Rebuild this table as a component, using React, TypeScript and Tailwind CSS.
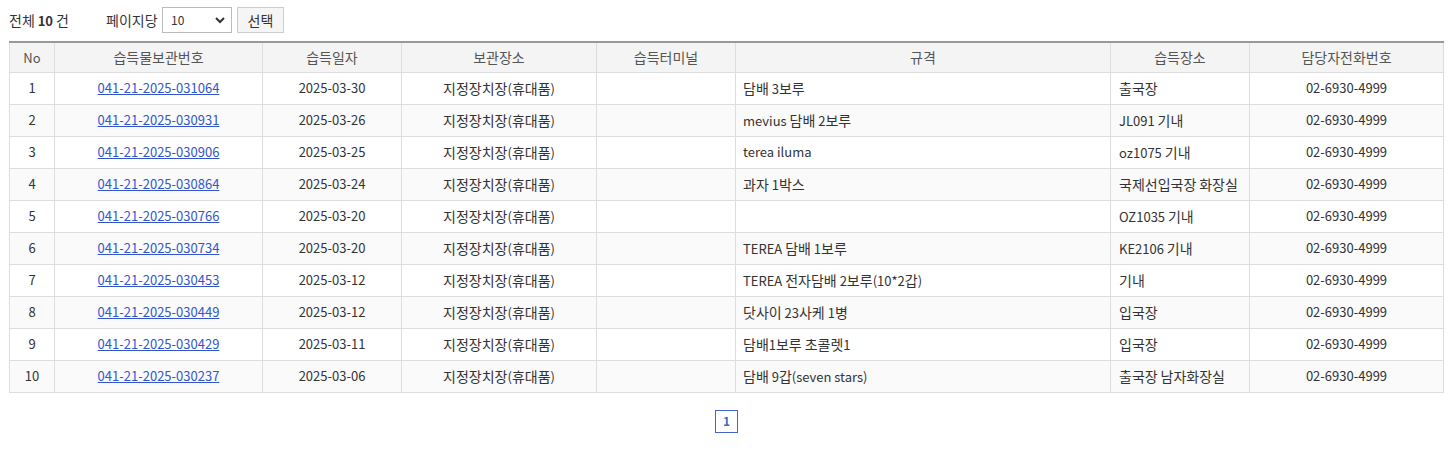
import React from 'react'

const rows = [
  ['1', '041-21-2025-031064', '2025-03-30', '지정장치장(휴대품)', '', '담배 3보루', '출국장'],
  ['2', '041-21-2025-030931', '2025-03-26', '지정장치장(휴대품)', '', 'mevius 담배 2보루', 'JL091 기내'],
  ['3', '041-21-2025-030906', '2025-03-25', '지정장치장(휴대품)', '', 'terea iluma', 'oz1075 기내'],
  ['4', '041-21-2025-030864', '2025-03-24', '지정장치장(휴대품)', '', '과자 1박스', '국제선입국장 화장실'],
  ['5', '041-21-2025-030766', '2025-03-20', '지정장치장(휴대품)', '', '', 'OZ1035 기내'],
  ['6', '041-21-2025-030734', '2025-03-20', '지정장치장(휴대품)', '', 'TEREA 담배 1보루', 'KE2106 기내'],
  ['7', '041-21-2025-030453', '2025-03-12', '지정장치장(휴대품)', '', 'TEREA 전자담배 2보루(10*2갑)', '기내'],
  ['8', '041-21-2025-030449', '2025-03-12', '지정장치장(휴대품)', '', '닷사이 23사케 1병', '입국장'],
  ['9', '041-21-2025-030429', '2025-03-11', '지정장치장(휴대품)', '', '담배1보루 초콜렛1', '입국장'],
  ['10', '041-21-2025-030237', '2025-03-06', '지정장치장(휴대품)', '', '담배 9갑(seven stars)', '출국장 남자화장실'],
]

const headers = ['No', '습득물보관번호', '습득일자', '보관장소', '습득터미널', '규격', '습득장소', '담당자전화번호']
const widths = ['w-[45px]', 'w-[208px]', 'w-[139px]', 'w-[195px]', 'w-[139px]', 'w-[375px]', 'w-[139px]', 'w-[194px]']

// 한글은 조금 넓게 보이도록 글자 크기만 키움
const K = ({ text }: { text: string }) => (
  <>
    {text.split(/([가-힣]+)/).map((part, i) =>
      /[가-힣]/.test(part) ? (
        <span key={i} className="text-[14px]">{part}</span>
      ) : (
        <span key={i}>{part}</span>
      )
    )}
  </>
)

export default function App() {
  return (
    <div className="w-[1456px] h-[451px] bg-white text-[13px] text-[#333] font-['Noto_Sans_CJK_KR','Noto_Sans',sans-serif]">
      {/* 상단 검색 */}
      <div className="flex items-center h-[41px] pl-[9px] pb-[1px]">
        <span className="w-[97px]">
          <K text="전체 " />
          <b className="font-bold">10</b>
          <K text=" 건" />
        </span>
        <span className="w-[56px]">
          <K text="페이지당" />
        </span>
        <div className="relative w-[70px] h-[26px] border border-[#bbb] bg-white flex items-center pl-[8px]">
          <span className="text-[12px]">10</span>
          <svg className="absolute right-[6px] top-[9px]" width="10" height="7" viewBox="0 0 10 7">
            <path d="M1 1l4 4 4-4" fill="none" stroke="#333" strokeWidth="2" />
          </svg>
        </div>
        <button className="ml-[5px] w-[47px] h-[26px] border border-[#ccc] bg-[#f5f5f5]">
          <K text="선택" />
        </button>
      </div>

      {/* 목록 */}
      <div className="px-[9px]">
        <table className="w-[1434px] table-fixed border-collapse border-t-2 border-t-[#999]">
          <thead>
            <tr className="bg-[#f4f4f4] h-[30px]">
              {headers.map((h, i) => (
                <th key={h} className={`${widths[i]} border border-[#ddd] border-t-0 font-normal text-[#555] text-center`}>
                  <K text={h} />
                </th>
              ))}
            </tr>
          </thead>
          <tbody>
            {rows.map((r, idx) => (
              <tr key={r[0]} className={`h-[32px] ${idx % 2 === 1 ? 'bg-[#fafafa]' : 'bg-white'}`}>
                <td className="border border-[#ddd] text-center">{r[0]}</td>
                <td className="border border-[#ddd] text-center">
                  <a href="#" className="text-[#3355cc] underline">{r[1]}</a>
                </td>
                <td className="border border-[#ddd] text-center">{r[2]}</td>
                <td className="border border-[#ddd] text-center"><K text={r[3]} /></td>
                <td className="border border-[#ddd] text-center">{r[4]}</td>
                <td className="border border-[#ddd] text-left pl-[7px]"><K text={r[5]} /></td>
                <td className="border border-[#ddd] text-left pl-[8px]"><K text={r[6]} /></td>
                <td className="border border-[#ddd] text-center">02-6930-4999</td>
              </tr>
            ))}
          </tbody>
        </table>
      </div>

      {/* 페이지 */}
      <div className="flex justify-center mt-[17px] pr-[3px]">
        <span className="w-[23px] h-[23px] border border-[#4466cc] text-[#4466cc] font-bold text-[12px] flex items-center justify-center">
          1
        </span>
      </div>
    </div>
  )
}
